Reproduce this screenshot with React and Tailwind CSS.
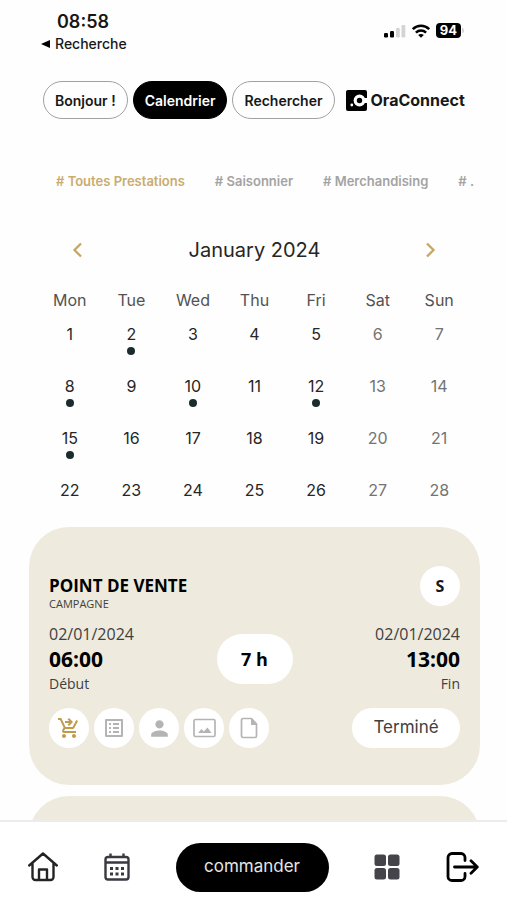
import React from "react";
import { MdOutlineShoppingCartCheckout, MdOutlineListAlt, MdPerson } from "react-icons/md";

const days = ["Mon", "Tue", "Wed", "Thu", "Fri", "Sat", "Sun"];
const dates = Array.from({ length: 28 }, (_, i) => i + 1);
const marked = [2, 8, 10, 12, 15];
const tags = ["# Toutes Prestations", "# Saisonnier", "# Merchandising", "# ."];

function StatusBar() {
  return (
    <header className="flex items-start justify-between pl-[41px] pr-[43px] pt-[10px]">
      <div>
        <div className="pl-4 text-[18px] font-semibold leading-6">08:58</div>
        <a href="#recherche" className="flex items-center gap-[5px] text-[14px] font-medium leading-5">
          <svg className="h-2 w-[9px]" viewBox="0 0 9 8" aria-hidden="true">
            <path d="M0 4 9 0v8z" />
          </svg>
          Recherche
        </a>
      </div>
      <div className="flex items-center gap-[6px] pt-[13px]">
        <svg className="h-[14px] w-[22px]" viewBox="0 0 22 14" aria-label="Signal">
          <rect x="0" y="9" width="4" height="4.500" rx="1.200" />
          <rect x="6" y="7" width="4" height="6.500" rx="1.200" />
          <rect x="12" y="4" width="3.800" height="9.500" rx="1.200" fill="#d4d4d4" />
          <rect x="17.500" y="1" width="3.800" height="12.500" rx="1.200" fill="#d4d4d4" />
        </svg>
        <svg className="h-[14px] w-[18px]" viewBox="0 0 18 14" fill="none" stroke="#000" strokeWidth="2.500" aria-label="Wifi">
          <path d="M.8 5.200C5.400.7 12.600.7 17.200 5.200M3.900 8.600c2.900-2.800 7.300-2.800 10.200 0" />
          <path d="M9 13.800 6.200 11c1.500-1.500 4.100-1.500 5.600 0z" fill="#000" stroke="none" />
        </svg>
        <div className="flex items-center gap-px">
          <span className="rounded-[4px] bg-black px-1 text-[13px] font-bold leading-[15px] text-white">94</span>
          <span className="h-[5px] w-[2px] rounded-r bg-neutral-300" />
        </div>
      </div>
    </header>
  );
}

function TopNav() {
  const pill = "h-[38px] rounded-full border px-[11px] text-[14px] font-semibold whitespace-nowrap";
  return (
    <nav className="mt-[27px] flex items-center gap-[5px] pl-[43px] pr-10">
      <button className={`${pill} border-neutral-400 text-neutral-900`}>Bonjour !</button>
      <button className={`${pill} border-black bg-black text-white`}>Calendrier</button>
      <button className={`${pill} border-neutral-400 text-neutral-900`}>Rechercher</button>
      <a href="#accueil" className="ml-[6px] flex items-center gap-1 text-[16px] font-bold">
        <svg className="h-[21px] w-[21px] shrink-0" viewBox="0 0 21 21" aria-hidden="true">
          <rect width="21" height="21" rx="2" />
          <circle cx="5.800" cy="15" r="1.400" fill="#fff" />
          <circle cx="13.500" cy="10.500" r="4.300" fill="none" stroke="#fff" strokeWidth="3.200" />
          <path d="M18 8h3v5h-3z" fill="#fff" />
        </svg>
        OraConnect
      </a>
    </nav>
  );
}

function Chevron({ d }) {
  return (
    <svg className="h-4 w-4" viewBox="0 0 16 16" fill="none" stroke="#c7a663" strokeWidth="2.300" aria-hidden="true">
      <path d={d} />
    </svg>
  );
}

function Calendar() {
  return (
    <section className="mt-[43px] pl-[39px] pr-[37px]">
      <div className="flex h-8 items-center justify-between px-8">
        <button aria-label="Mois précédent"><Chevron d="M10 1.500 3.500 8l6.500 6.500" /></button>
        <h1 className="text-[20px] text-neutral-800">January 2024</h1>
        <button aria-label="Mois suivant"><Chevron d="m5 1.500 6.500 6.500L5 14.500" /></button>
      </div>
      <div className="mt-6 grid grid-cols-7 text-center text-[16px] leading-5 text-neutral-600">
        {days.map((d) => <div key={d}>{d}</div>)}
      </div>
      <div className="mt-[14px] grid grid-cols-7">
        {dates.map((n) => (
          <button
            key={n}
            className={`flex h-[52px] flex-col items-center gap-[3px] text-[16px] leading-5 ${(n - 1) % 7 > 4 ? "text-neutral-500" : "text-neutral-800"}`}
          >
            {n}
            {marked.includes(n) && <span className="h-2 w-2 rounded-full bg-[#1c2b2e]" />}
          </button>
        ))}
      </div>
    </section>
  );
}

function ImageIcon() {
  return (
    <svg className="h-5 w-[23px]" viewBox="0 0 23 20" aria-hidden="true">
      <rect x="1" y="1.500" width="21" height="17" rx="1.500" fill="none" stroke="currentColor" strokeWidth="1.700" />
      <path d="M5 15 8.500 11l2.300 2.500L14.500 9.500l4 5.500z" fill="currentColor" />
    </svg>
  );
}

function FileIcon() {
  return (
    <svg className="h-[22px] w-[18px]" viewBox="0 0 18 22" aria-hidden="true">
      <path d="M3 1.500h8.500L16.500 7v12a1.500 1.500 0 0 1-1.500 1.500H3A1.500 1.500 0 0 1 1.500 19V3A1.500 1.500 0 0 1 3 1.500Z" fill="none" stroke="currentColor" strokeWidth="1.700" />
      <path d="M11 1v7h6z" fill="currentColor" />
    </svg>
  );
}

const actions = [
  { label: "Commande", icon: <MdOutlineShoppingCartCheckout size={24} />, color: "text-[#c19a4b]" },
  { label: "Liste", icon: <MdOutlineListAlt size={24} />, color: "text-[#b4b4b4]" },
  { label: "Profil", icon: <MdPerson size={25} />, color: "text-[#b4b4b4]" },
  { label: "Image", icon: <ImageIcon />, color: "text-[#b4b4b4]" },
  { label: "Document", icon: <FileIcon />, color: "text-[#b4b4b4]" },
];

function EventCard() {
  return (
    <article className="rounded-[40px] bg-[#eeeadd] px-5 pb-[37px] pt-[39px] font-['Open_Sans',sans-serif]">
      <div className="flex items-start justify-between">
        <div className="pt-[10px]">
          <h2 className="text-[17px] font-bold leading-5 text-black">POINT DE VENTE</h2>
          <p className="text-[11px] leading-4 text-neutral-700">CAMPAGNE</p>
        </div>
        <span className="flex h-10 w-10 items-center justify-center rounded-full bg-white text-[16px] font-bold">S</span>
      </div>
      <div className="mt-[10px] grid grid-cols-3 items-center text-[14px] leading-6 text-neutral-700">
        <div>
          <div className="text-[16px]">02/01/2024</div>
          <div className="text-[21px] font-bold leading-[26px] text-black">06:00</div>
          <div>Début</div>
        </div>
        <div className="flex h-[50px] w-[76px] items-center justify-center justify-self-center rounded-full bg-white text-[18px] font-bold text-black">7 h</div>
        <div className="text-right">
          <div className="text-[16px]">02/01/2024</div>
          <div className="text-[21px] font-bold leading-[26px] text-black">13:00</div>
          <div>Fin</div>
        </div>
      </div>
      <div className="mt-3 flex items-center justify-between">
        <div className="flex gap-[5px]">
          {actions.map((a) => (
            <button key={a.label} aria-label={a.label} className={`flex h-10 w-10 items-center justify-center rounded-full bg-white ${a.color}`}>
              {a.icon}
            </button>
          ))}
        </div>
        <button className="h-10 w-[108px] rounded-full bg-white font-[Inter,sans-serif] text-[17px] text-neutral-700">Terminé</button>
      </div>
    </article>
  );
}

function BottomNav() {
  return (
    <nav className="flex h-20 shrink-0 items-center justify-between border-t-2 border-[#ececec] bg-white px-7 pt-3">
      <a href="#home" aria-label="Accueil">
        <svg className="h-[30px] w-[30px]" viewBox="0 0 30 30" fill="none" stroke="#242424" strokeWidth="2.400" strokeLinecap="round" strokeLinejoin="round" aria-hidden="true">
          <path d="M1.200 13.500 15 1.500l13.800 12M4.500 11.500V25a3 3 0 0 0 3 3h15a3 3 0 0 0 3-3V11.500M11 28V17.500h8V28" />
        </svg>
      </a>
      <a href="#calendar" aria-label="Calendrier">
        <svg className="h-[28px] w-[26px]" viewBox="0 0 26 28" fill="none" stroke="#3a3940" strokeWidth="2.400" aria-hidden="true">
          <rect x="1.500" y="4" width="23" height="22.500" rx="2.500" />
          <path d="M1.500 9.500h23M6.500.5V4m13-3.500V4" />
          <path d="M6 15.500h3m2.500 0h3m2.500 0h3M6 21h3m2.500 0h3m2.500 0h3" strokeWidth="3" />
        </svg>
      </a>
      <button className="h-[49px] w-[153px] rounded-full bg-black text-[17px] text-neutral-200">commander</button>
      <a href="#menu" aria-label="Menu">
        <svg className="h-[26px] w-[26px]" viewBox="0 0 26 26" fill="#45444b" aria-hidden="true">
          <rect x=".5" y=".5" width="11.500" height="11.500" rx="2.500" />
          <rect x="14" y=".5" width="11.500" height="11.500" rx="2.500" />
          <rect x=".5" y="14" width="11.500" height="11.500" rx="2.500" />
          <rect x="14" y="14" width="11.500" height="11.500" rx="2.500" />
        </svg>
      </a>
      <a href="#logout" aria-label="Déconnexion">
        <svg className="h-[30px] w-[33px]" viewBox="0 0 33 30" fill="none" stroke="#000" strokeWidth="2.800" strokeLinecap="round" strokeLinejoin="round" aria-hidden="true">
          <path d="M19 8.500V5.500a4 4 0 0 0-4-4H6a4 4 0 0 0-4 4v19a4 4 0 0 0 4 4h9a4 4 0 0 0 4-4v-3M8.500 15h22M25 8.800l6.300 6.200-6.300 6.200" />
        </svg>
      </a>
    </nav>
  );
}

export default function App() {
  return (
    <div className="flex h-screen flex-col bg-[#fefefe] font-[Inter,sans-serif] text-neutral-900">
      <main className="min-h-0 flex-1 overflow-hidden">
        <StatusBar />
        <TopNav />
        <div className="ml-14 mr-6 mt-[52px] flex gap-[30px] overflow-hidden whitespace-nowrap text-[13px] font-semibold leading-5">
          {tags.map((t, i) => (
            <a key={t} href="#tag" className={i === 0 ? "text-[#c9ac6f]" : "text-[#a3a3a3]"}>{t}</a>
          ))}
        </div>
        <Calendar />
        <div className="-mt-[5px] flex flex-col gap-[11px] pl-[29px] pr-[27px]">
          <EventCard />
          <div className="h-[258px] rounded-[40px] bg-[#eeeadd]" />
        </div>
      </main>
      <BottomNav />
    </div>
  );
}
